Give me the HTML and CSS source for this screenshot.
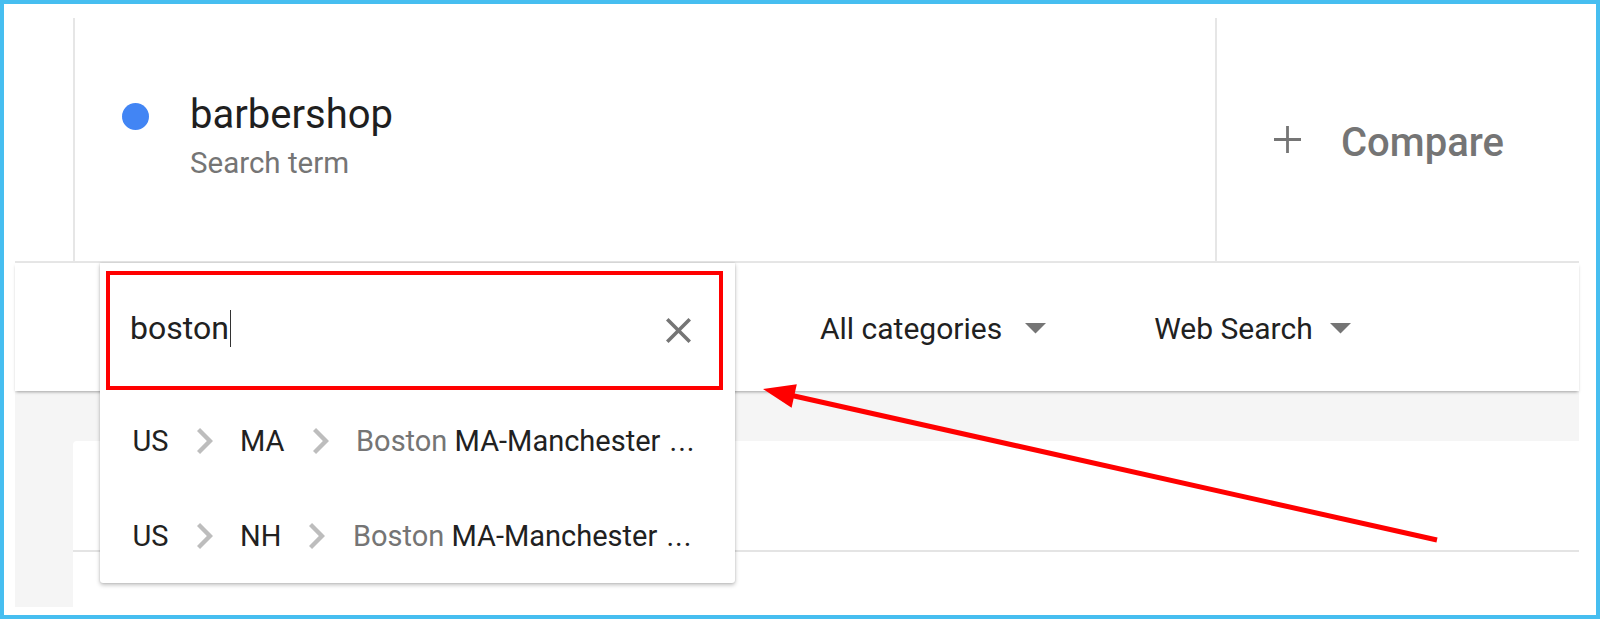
FILE: index.html
```html
<!DOCTYPE html>
<html lang="en">
<head>
<meta charset="utf-8">
<title>Explore - barbershop</title>
<link rel="stylesheet" href="styles.css">
</head>
<body>
<div class="frame">
  <div class="app">
    <header class="header">
      <div class="header-gutter"></div>
      <div class="term">
        <span class="term-dot"></span>
        <div class="term-text">
          <div class="term-name">barbershop</div>
          <div class="term-type">Search term</div>
        </div>
      </div>
      <div class="compare">
        <svg class="compare-plus" viewBox="0 0 29 29"><path d="M14.5 1v27M1 14.5h27"/></svg>
        <span class="compare-label">Compare</span>
      </div>
    </header>

    <div class="toolbar">
      <div class="picker picker-category">
        <span class="picker-label">All categories</span>
        <svg class="picker-arrow" viewBox="7 10 10 5"><path d="M7 10l5 5 5-5z"/></svg>
      </div>
      <div class="picker picker-property">
        <span class="picker-label">Web Search</span>
        <svg class="picker-arrow" viewBox="7 10 10 5"><path d="M7 10l5 5 5-5z"/></svg>
      </div>
    </div>

    <div class="content">
      <div class="card">
        <div class="card-head"></div>
      </div>
    </div>

    <div class="geo-menu">
      <div class="geo-input">
        <span class="geo-query">boston</span>
        <span class="geo-caret"></span>
        <svg class="geo-clear" viewBox="5 5 14 14"><path d="M19 6.41L17.59 5 12 10.59 6.41 5 5 6.41 10.59 12 5 17.59 6.41 19 12 13.41 17.59 19 19 17.59 13.41 12z"/></svg>
      </div>
      <ul class="geo-list">
        <li class="geo-item">
          <span>US</span>
          <svg class="geo-sep" viewBox="8.59 6 7.41 12"><path d="M10 6L8.59 7.41 13.17 12l-4.58 4.59L10 18l6-6z"/></svg>
          <span>MA</span>
          <svg class="geo-sep" viewBox="8.59 6 7.41 12"><path d="M10 6L8.59 7.41 13.17 12l-4.58 4.59L10 18l6-6z"/></svg>
          <span class="geo-name"><span class="geo-match">Boston</span> MA-Manchester <span class="geo-more">...</span></span>
        </li>
        <li class="geo-item">
          <span>US</span>
          <svg class="geo-sep" viewBox="8.59 6 7.41 12"><path d="M10 6L8.59 7.41 13.17 12l-4.58 4.59L10 18l6-6z"/></svg>
          <span>NH</span>
          <svg class="geo-sep" viewBox="8.59 6 7.41 12"><path d="M10 6L8.59 7.41 13.17 12l-4.58 4.59L10 18l6-6z"/></svg>
          <span class="geo-name"><span class="geo-match">Boston</span> MA-Manchester <span class="geo-more">...</span></span>
        </li>
      </ul>
    </div>
  </div>

  <svg class="annotation" viewBox="0 0 1600 619" width="1600" height="619">
    <line x1="1437" y1="540" x2="792" y2="395.5" stroke="#ff0000" stroke-width="5"/>
    <polygon points="763,389 791.6,407.7 796.8,384.3" fill="#ff0000"/>
  </svg>
</div>
</body>
</html>
```
FILE: styles.css
```css
* {
  box-sizing: border-box;
}

html,
body {
  margin: 0;
  padding: 0;
}

body {
  font-family: Roboto, "Noto Sans", "Liberation Sans", Arial, sans-serif;
  background: #ffffff;
  overflow: hidden;
}

.frame {
  position: relative;
  width: 1600px;
  height: 619px;
  border: 4px solid #46bef0;
  background: #ffffff;
  padding: 0 17px 8px 11px;
  overflow: hidden;
}

.app {
  position: relative;
  width: 1564px;
  height: 603px;
  display: flex;
  flex-direction: column;
}

/* ---------- header ---------- */
.header {
  flex: none;
  height: 259px;
  display: flex;
  padding-top: 14px;
  border-bottom: 2px solid #e6e6e6;
  background: #ffffff;
}

.header-gutter {
  flex: none;
  width: 60px;
  border-right: 2px solid #e6e6e6;
}

.term {
  flex: none;
  width: 1142px;
  display: flex;
  align-items: flex-start;
  padding: 73px 0 0 47px;
  border-right: 2px solid #e6e6e6;
}

.term-dot {
  flex: none;
  width: 27px;
  height: 27px;
  border-radius: 50%;
  background: #4285f4;
  margin-top: 12px;
  margin-right: 41px;
}

.term-name {
  font-size: 40px;
  line-height: 48px;
  color: #1f1f1f;
}

.term-type {
  font-size: 29.5px;
  line-height: 36px;
  color: #757575;
  margin-top: 6px;
}

.compare {
  flex: 1;
  display: flex;
  align-items: center;
  padding-left: 56px;
}

.compare-plus {
  flex: none;
  width: 29px;
  height: 29px;
  margin-right: 39px;
  fill: none;
  stroke: #757575;
  stroke-width: 2.8;
}

.compare-label {
  font-size: 40px;
  font-weight: 500;
  line-height: 48px;
  color: #757575;
  margin-top: 6px;
}

/* ---------- toolbar ---------- */
.toolbar {
  position: relative;
  z-index: 1;
  flex: none;
  height: 128px;
  display: flex;
  align-items: center;
  padding: 3px 0 0 805px;
  background: #ffffff;
  box-shadow: 0 2px 3px -1px rgba(0, 0, 0, 0.35);
}

.picker {
  display: flex;
  align-items: center;
  font-size: 30px;
  line-height: 36px;
  color: #212121;
  white-space: nowrap;
}

.picker-arrow {
  flex: none;
  width: 21px;
  height: 10.5px;
  fill: #757575;
}

.picker-category {
  margin-right: 108px;
}

.picker-category .picker-label {
  margin-right: 23px;
}

.picker-property .picker-label {
  margin-right: 17px;
}

/* ---------- content ---------- */
.content {
  flex: 1;
  display: flex;
  padding: 50px 0 0 58px;
  background: #f5f5f5;
}

.card {
  flex: 1;
  background: #ffffff;
  border-radius: 4px 0 0 0;
}

.card-head {
  height: 111px;
  border-bottom: 2px solid #e4e4e4;
}

/* ---------- location dropdown ---------- */
.geo-menu {
  position: absolute;
  z-index: 2;
  left: 85px;
  top: 259px;
  width: 635px;
  background: #ffffff;
  border-radius: 0 0 3px 3px;
  box-shadow: 0 2px 4px rgba(0, 0, 0, 0.25), 0 0 2px rgba(0, 0, 0, 0.14);
}

.geo-input {
  height: 119px;
  margin: 8px 12px 3px 6px;
  border: 4px solid #ff0000;
  display: flex;
  align-items: center;
  padding: 0 28px 0 20px;
}

.geo-query {
  font-size: 32px;
  line-height: 38px;
  color: #212121;
  margin-bottom: 5px;
}

.geo-caret {
  flex: none;
  width: 1.5px;
  height: 37px;
  background: #333333;
  margin-left: 1px;
  margin-bottom: 4px;
}

.geo-clear {
  flex: none;
  margin-left: auto;
  width: 25px;
  height: 25px;
  fill: #757575;
}

.geo-list {
  list-style: none;
  margin: 0;
  padding: 0;
}

.geo-item {
  height: 95px;
  display: flex;
  align-items: center;
  padding-left: 32.5px;
  font-size: 29px;
  line-height: 34px;
  color: #212121;
  white-space: nowrap;
}

.geo-sep {
  flex: none;
  width: 16px;
  height: 26px;
  fill: #bdbdbd;
  margin: 0 27.5px 0 28px;
}

.geo-match {
  color: #757575;
}

.geo-more {
  margin-left: 2px;
  letter-spacing: 1px;
}

/* ---------- annotation overlay ---------- */
.annotation {
  position: absolute;
  left: -4px;
  top: -4px;
  z-index: 5;
  pointer-events: none;
}
```
